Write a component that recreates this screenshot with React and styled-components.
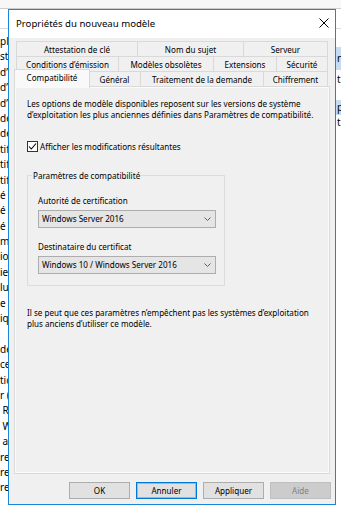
import React from 'react';
import styled, { createGlobalStyle } from 'styled-components';

const FONT = `"Noto Sans", "Liberation Sans", Arial, sans-serif`;

const GlobalStyle = createGlobalStyle`
  html, body { margin: 0; padding: 0; }
  body {
    width: 341px;
    height: 509px;
    overflow: hidden;
    background: #ffffff;
    font-family: ${FONT};
  }
  * { box-sizing: border-box; }
`;

/* ---------- background window ---------- */
const Desktop = styled.div`
  position: relative;
  width: 341px;
  height: 509px;
  overflow: hidden;
  background: #ffffff;
`;

const BackWindow = styled.div`
  display: flex;
  flex-direction: column;
  height: 100%;
`;

const BackTop = styled.div`
  height: 9px;
  background: #f7f7f7;
  border-bottom: 1px solid #cdcdcd;
`;

const BackHeader = styled.div`
  height: 20px;
  background: #ffffff;
  border-bottom: 1px solid #dadada;
`;

const BackBody = styled.div`
  flex: 1;
  display: flex;
  justify-content: space-between;
`;

const LeftList = styled.div`
  width: 30px;
  overflow: hidden;
  padding-top: 5px;
`;

const ListRow = styled.div`
  height: 15.4px;
  line-height: 15.4px;
  font-size: 10px;
  color: #000;
  white-space: nowrap;
`;

const RightList = styled.div`
  width: 5px;
  overflow: hidden;
  padding-top: 18px;
`;

const RightItem = styled.div`
  height: ${(p) => p.$h}px;
  line-height: ${(p) => p.$h}px;
  background: ${(p) => (p.$hl ? '#c6ddf1' : 'transparent')};
  font-size: 10px;
  color: #000;
  white-space: nowrap;
  padding-left: 1px;
`;

/* ---------- dialog ---------- */
const Dialog = styled.div`
  position: absolute;
  left: 8px;
  top: 9px;
  width: 328px;
  height: 496px;
  border: 1px solid #1a86d9;
  background: #f0f0f0;
  display: flex;
  flex-direction: column;
`;

const TitleBar = styled.div`
  height: 28px;
  flex: none;
  background: #ffffff;
  display: flex;
  align-items: center;
  justify-content: space-between;
  padding: 0 6px 2px 7px;
`;

const Title = styled.span`
  font-size: 9.6px;
  color: #000;
`;

const CloseIcon = styled.svg`
  display: block;
  width: 10px;
  height: 10px;
`;

const Body = styled.div`
  flex: 1;
  display: flex;
  flex-direction: column;
  padding: 3px 5px 5px 5px;
  min-height: 0;
`;

const TabStrip = styled.div`
  display: flex;
  flex-direction: column;
  padding: 0 2px;
  flex: none;
`;

const TabRow = styled.div`
  display: flex;
  align-items: flex-start;
  height: 15px;
`;

const Tab = styled.div`
  position: relative;
  width: ${(p) => p.$w + (p.$active ? 4 : 0)}px;
  height: ${(p) => (p.$active ? 19 : 15)}px;
  margin: ${(p) => (p.$active ? '-2px -2px 0 -2px' : '0')};
  z-index: ${(p) => (p.$active ? 2 : 1)};
  background: ${(p) => (p.$active ? '#f9f9f9' : '#f0f0f0')};
  border: 1px solid #d9d9d9;
  border-bottom: none;
  border-right: ${(p) => (p.$active ? '1px solid #d9d9d9' : 'none')};
  display: flex;
  justify-content: center;
  align-items: ${(p) => (p.$active ? 'flex-start' : 'center')};
  padding-top: ${(p) => (p.$active ? '2px' : '0')};
  font-size: 8.1px;
  color: #000;
  white-space: nowrap;

  &:last-child {
    border-right: 1px solid #d9d9d9;
  }
`;

const Panel = styled.div`
  flex: 1;
  min-height: 0;
  background: #f0f0f0;
  border: 1px solid #d9d9d9;
  box-shadow: inset 0 0 0 1px #fbfbfb;
  padding: 11px 12px 0 12px;
`;

const Para = styled.p`
  margin: ${(p) => p.$mt || 0}px 0 0 0;
  font-size: 8.1px;
  line-height: 11px;
  color: #000;
`;

const CheckRow = styled.label`
  display: flex;
  align-items: center;
  gap: 2px;
  height: 11px;
  margin-top: 21px;
  font-size: 8.1px;
  color: #000;
`;

const CheckBox = styled.span`
  width: 11px;
  height: 11px;
  border: 1px solid #333333;
  background: #ffffff;
  display: flex;
  align-items: center;
  justify-content: center;
`;

const GroupBox = styled.fieldset`
  margin: 18px 0 0 0;
  width: 198px;
  border: 1px solid #dcdcdc;
  padding: 0 10px 11px 10px;
  min-width: 0;
`;

const GroupLegend = styled.legend`
  padding: 0 1px;
  margin-left: -6px;
  font-size: 8.1px;
  line-height: 11px;
  color: #000;
`;

const FieldLabel = styled.div`
  margin-top: ${(p) => p.$mt}px;
  font-size: 8.1px;
  line-height: 11px;
  color: #000;
`;

const Combo = styled.div`
  margin-top: 3.5px;
  width: 178px;
  height: 18px;
  border: 1px solid #adadad;
  background: #e5e5e5;
  display: flex;
  align-items: center;
  justify-content: space-between;
  padding: 0 4px 0 3px;
  font-size: 8.1px;
  color: #000;
`;

const Chevron = styled.svg`
  display: block;
  width: 7px;
  height: 4px;
`;

const ButtonRow = styled.div`
  flex: none;
  display: flex;
  justify-content: flex-end;
  gap: 6px;
  margin: 8px -1px 0 0;
  height: 17px;
`;

const Button = styled.button`
  width: 61px;
  height: 17px;
  padding: 0;
  margin: 0;
  font-family: ${FONT};
  font-size: 8.1px;
  color: ${(p) => (p.disabled ? '#838383' : '#000')};
  background: ${(p) => (p.disabled ? '#cccccc' : '#e1e1e1')};
  border: 1px solid
    ${(p) => (p.disabled ? '#bfbfbf' : p.$primary ? '#0078d7' : '#adadad')};
  box-shadow: ${(p) =>
    p.$primary ? 'inset 0 0 0 1px rgba(0,120,215,0.35)' : 'none'};
  border-radius: 0;
`;

const leftRows = [
  'pl', 'st', 'd\u2019i', 'd\u2019i', 'd\u2019i', 'de', 'de', 'tif', 'tif', 'tif',
  'é c', 'é c', 'é c', 'm', 'io', 'ieu', 'lu', 'e', 'iq', '',
  'de', 'ce', 'tic', 'r (', '\u00a0R', '\u00a0W', '\u00a0a', 're', 're', 're',
];

const rightRows = [
  { h: 23, hl: true, t: 'n' },
  { h: 18, t: 'ti' },
  { h: 12, t: '' },
  { h: 15, hl: true, t: 'p' },
  { h: 14, t: 'ti' },
];

const tabRows = [
  [
    { label: 'Attestation de clé', w: 121 },
    { label: 'Nom du sujet', w: 106 },
    { label: 'Serveur', w: 85 },
  ],
  [
    { label: 'Conditions d\u2019émission', w: 102 },
    { label: 'Modèles obsolètes', w: 95 },
    { label: 'Extensions', w: 63 },
    { label: 'Sécurité', w: 52 },
  ],
  [
    { label: 'Compatibilité', w: 72, active: true },
    { label: 'Général', w: 52 },
    { label: 'Traitement de la demande', w: 123 },
    { label: 'Chiffrement', w: 65 },
  ],
];

function ChevronDown() {
  return (
    <Chevron viewBox="0 0 7 4">
      <polyline points="0.5,0.5 3.5,3.5 6.5,0.5" fill="none" stroke="#5f5f5f" strokeWidth="1" />
    </Chevron>
  );
}

export default function App() {
  return (
    <>
      <GlobalStyle />
      <Desktop>
        <BackWindow>
          <BackTop />
          <BackHeader />
          <BackBody>
            <LeftList>
              {leftRows.map((t, i) => (
                <ListRow key={i}>{t}</ListRow>
              ))}
            </LeftList>
            <RightList>
              {rightRows.map((r, i) => (
                <RightItem key={i} $h={r.h} $hl={r.hl}>
                  {r.t}
                </RightItem>
              ))}
            </RightList>
          </BackBody>
        </BackWindow>

        <Dialog>
          <TitleBar>
            <Title>Propriétés du nouveau modèle</Title>
            <CloseIcon viewBox="0 0 10 10">
              <line x1="0.5" y1="0.5" x2="9.5" y2="9.5" stroke="#000" strokeWidth="1" />
              <line x1="9.5" y1="0.5" x2="0.5" y2="9.5" stroke="#000" strokeWidth="1" />
            </CloseIcon>
          </TitleBar>
          <Body>
            <TabStrip>
              {tabRows.map((row, ri) => (
                <TabRow key={ri}>
                  {row.map((tab) => (
                    <Tab key={tab.label} $w={tab.w} $active={tab.active}>
                      {tab.label}
                    </Tab>
                  ))}
                </TabRow>
              ))}
            </TabStrip>
            <Panel>
              <Para>
                Les options de modèle disponibles reposent sur les versions de système
                <br />
                d’exploitation les plus anciennes définies dans Paramètres de compatibilité.
              </Para>
              <CheckRow>
                <CheckBox>
                  <svg width="9" height="9" viewBox="0 0 9 9">
                    <polyline points="1,4.5 3.3,7 8,1.5" fill="none" stroke="#000" strokeWidth="1.1" />
                  </svg>
                </CheckBox>
                Afficher les modifications résultantes
              </CheckRow>
              <GroupBox>
                <GroupLegend>Paramètres de compatibilité</GroupLegend>
                <FieldLabel $mt={14}>Autorité de certification</FieldLabel>
                <Combo>
                  <span>Windows Server 2016</span>
                  <ChevronDown />
                </Combo>
                <FieldLabel $mt={13.5}>Destinataire du certificat</FieldLabel>
                <Combo>
                  <span>Windows 10 / Windows Server 2016</span>
                  <ChevronDown />
                </Combo>
              </GroupBox>
              <Para $mt={21.5}>
                Il se peut que ces paramètres n’empêchent pas les systèmes d’exploitation
                <br />
                plus anciens d’utiliser ce modèle.
              </Para>
            </Panel>
            <ButtonRow>
              <Button>OK</Button>
              <Button $primary>Annuler</Button>
              <Button>Appliquer</Button>
              <Button disabled>Aide</Button>
            </ButtonRow>
          </Body>
        </Dialog>
      </Desktop>
    </>
  );
}
